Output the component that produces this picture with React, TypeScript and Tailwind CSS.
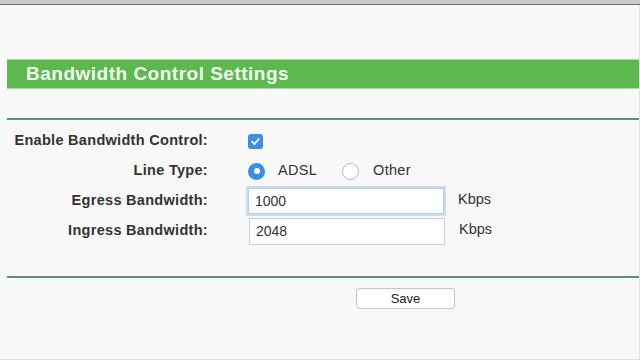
export default function App() {
  return (
    <div className="w-[640px] h-[360px] overflow-hidden bg-[#f8f8f8] font-['Liberation_Sans',Arial,sans-serif] flex flex-col">
      {/* Browser chrome edge */}
      <div className="h-[4px] bg-[#c9c9c9]" />
      <div className="h-[1px] bg-[#6f6f6f]" />

      <div className="flex-1 flex flex-col pl-[7px] border-r border-[#e2e2e2]">
        {/* Title */}
        <div className="mt-[54px] h-[30px] bg-[#5cb84f] border-y border-[#a8dca0] flex items-center pl-[19px]">
          <h1 className="text-[19px] font-bold text-[#f2fbef] tracking-[0.5px]">
            Bandwidth Control Settings
          </h1>
        </div>

        <div className="mt-[29px] h-[2px] bg-[#5f8f80]" />

        {/* Form */}
        <div className="mt-[6px] grid grid-cols-[201px_1fr] gap-x-[40px] text-[14.5px] text-[#333]">
          <div className="h-[30px] flex items-center justify-end font-bold tracking-[0.3px]">Enable Bandwidth Control:</div>
          <div className="h-[30px] flex items-center">
            <span className="w-[15px] h-[15px] rounded-[3px] bg-[#3a8ee6] flex items-center justify-center">
              <svg width="11" height="11" viewBox="0 0 10 10">
                <path d="M2 5.2 L4.1 7.3 L8 2.8" stroke="#fff" strokeWidth="1.6" fill="none" strokeLinecap="round" strokeLinejoin="round" />
              </svg>
            </span>
          </div>

          <div className="h-[30px] flex items-center justify-end font-bold tracking-[0.3px]">Line Type:</div>
          <div className="h-[30px] flex items-center">
            <span className="w-[17px] h-[17px] rounded-full bg-[#3a8ee6] flex items-center justify-center">
              <span className="w-[6px] h-[6px] rounded-full bg-white" />
            </span>
            <span className="ml-[13px] tracking-[0.3px]">ADSL</span>
            <span className="ml-[25px] w-[17px] h-[17px] rounded-full border border-[#b8b8b8] bg-white" />
            <span className="ml-[14px] tracking-[0.3px]">Other</span>
          </div>

          <div className="h-[30px] flex items-center justify-end font-bold tracking-[0.3px]">Egress Bandwidth:</div>
          <div className="h-[30px] flex items-center">
            <div className="w-[196px] h-[26px] bg-white border border-[#b9cfe6] shadow-[0_0_0_2px_#c9dcf0] flex items-center pl-[6px] text-[14px]">
              1000
            </div>
            <span className="ml-[14px] -mt-[3px]">Kbps</span>
          </div>

          <div className="h-[30px] flex items-center justify-end font-bold tracking-[0.3px]">Ingress Bandwidth:</div>
          <div className="h-[30px] flex items-center">
            <div className="ml-[1px] w-[196px] h-[27px] bg-white border border-[#cfcfcf] flex items-center pl-[6px] text-[14px]">
              2048
            </div>
            <span className="ml-[14px] -mt-[3px]">Kbps</span>
          </div>
        </div>

        <div className="mt-[30px] h-[2px] bg-[#5f8f80]" />

        <div className="mt-[10px] pl-[349px]">
          <button className="w-[99px] h-[21px] bg-white border border-[#c4c4c4] rounded-[4px] text-[13px] text-[#222] flex items-center justify-center">
            Save
          </button>
        </div>
      </div>

      <div className="h-[1px] bg-[#e0e0e0]" />
    </div>
  );
}
